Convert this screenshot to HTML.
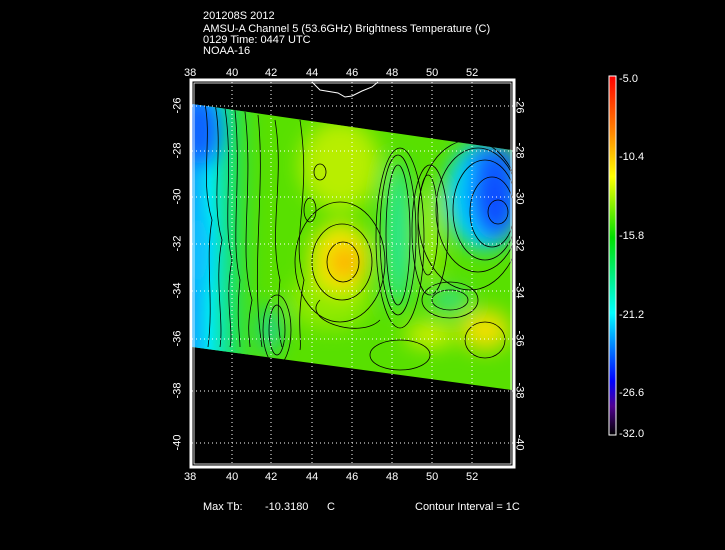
<!DOCTYPE html>
<html><head><meta charset="utf-8"><style>
html,body{margin:0;padding:0;background:#000;}
body{width:725px;height:550px;overflow:hidden;position:relative;font-family:"Liberation Sans",sans-serif;color:#fff;}
.t{position:absolute;font-size:11px;line-height:11px;white-space:pre;color:#fff;}
</style></head><body>
<div class="t" style="left:203px;top:11px">201208S 2012</div>
<div class="t" style="left:203px;top:24px">AMSU-A Channel 5 (53.6GHz) Brightness Temperature (C)</div>
<div class="t" style="left:203px;top:35px">0129 Time: 0447 UTC</div>
<div class="t" style="left:203px;top:46px">NOAA-16</div>

<svg width="725" height="550" style="position:absolute;left:0;top:0" xmlns="http://www.w3.org/2000/svg">
<defs>
<clipPath id="sw"><polygon points="192,104 512,150 512,390 192,347"/></clipPath>
<filter id="bl" x="-50%" y="-50%" width="200%" height="200%"><feGaussianBlur stdDeviation="10"/></filter>
<linearGradient id="cb" x1="0" y1="0" x2="0" y2="1">
<stop offset="0" stop-color="#ff0000"/><stop offset="0.15" stop-color="#ff8000"/>
<stop offset="0.28" stop-color="#ffff00"/><stop offset="0.45" stop-color="#00e000"/>
<stop offset="0.66" stop-color="#00ffff"/><stop offset="0.85" stop-color="#0000ff"/>
<stop offset="0.92" stop-color="#500090"/><stop offset="1" stop-color="#000000"/>
</linearGradient>
<linearGradient id="lf" x1="0" y1="0" x2="1" y2="0">
<stop offset="0" stop-color="#10a0ff"/><stop offset="0.25" stop-color="#00e8f0"/>
<stop offset="0.55" stop-color="#20e060"/><stop offset="1" stop-color="#50e000" stop-opacity="0"/>
</linearGradient>
</defs>
<g clip-path="url(#sw)">
<rect x="180" y="95" width="340" height="300" fill="#58e000"/>
<rect x="190" y="95" width="80" height="260" fill="url(#lf)"/>
<g filter="url(#bl)">
<ellipse cx="200" cy="130" rx="20" ry="35" fill="#1060ff"/>
<ellipse cx="198" cy="250" rx="10" ry="40" fill="#10c0ff"/>
<ellipse cx="270" cy="330" rx="10" ry="25" fill="#10d0a0"/>
<ellipse cx="340" cy="165" rx="40" ry="45" fill="#b8ee00"/>
<ellipse cx="330" cy="300" rx="40" ry="30" fill="#90ea00"/>
<ellipse cx="340" cy="258" rx="30" ry="35" fill="#f0e800"/>
<ellipse cx="345" cy="262" rx="14" ry="16" fill="#ffa800"/>
<ellipse cx="398" cy="235" rx="12" ry="75" fill="#20e8a0"/>
<ellipse cx="430" cy="235" rx="10" ry="50" fill="#a0ec10"/>
<ellipse cx="485" cy="195" rx="40" ry="55" fill="#00d0ff"/>
<ellipse cx="495" cy="195" rx="25" ry="45" fill="#1050ff"/>
<ellipse cx="495" cy="160" rx="25" ry="15" fill="#1060ff"/>
<ellipse cx="450" cy="300" rx="20" ry="12" fill="#30e080"/>
<ellipse cx="485" cy="330" rx="25" ry="20" fill="#f0e000"/>
<ellipse cx="430" cy="335" rx="25" ry="12" fill="#d8f000"/>
</g>
<g fill="none" stroke="#000" stroke-width="0.8">
<path d="M205,104 C212,140 200,180 212,220 C205,260 214,300 208,347"/><path d="M215,104 C224,150 210,200 222,240 C214,280 224,320 220,347"/>
<path d="M225,108 C234,170 222,220 232,260 C224,300 234,330 230,347"/><path d="M235,110 C242,180 230,240 240,280 C236,320 240,335 240,347"/>
<path d="M245,112 C254,190 238,250 252,300 C246,330 250,340 250,347"/><path d="M258,115 C266,190 250,270 262,347"/>
<path d="M275,120 C285,180 268,230 280,280 C276,320 280,340 282,347"/><path d="M300,120 C312,200 290,240 304,280 C296,320 302,340 300,350"/>
<ellipse cx="343" cy="262" rx="16" ry="20"/><ellipse cx="342" cy="262" rx="30" ry="38"/>
<ellipse cx="340" cy="262" rx="45" ry="60"/><path d="M320,300 C300,320 360,340 380,320"/>
<ellipse cx="398" cy="235" rx="12" ry="70"/><ellipse cx="398" cy="235" rx="18" ry="80"/>
<ellipse cx="400" cy="238" rx="24" ry="90"/><ellipse cx="428" cy="225" rx="10" ry="50"/>
<ellipse cx="430" cy="230" rx="18" ry="65"/>
<ellipse cx="498" cy="212" rx="10" ry="12"/><ellipse cx="492" cy="212" rx="22" ry="35"/>
<ellipse cx="485" cy="210" rx="32" ry="50"/><ellipse cx="478" cy="210" rx="42" ry="62"/>
<ellipse cx="470" cy="215" rx="52" ry="75"/>
<ellipse cx="450" cy="300" rx="18" ry="10"/><ellipse cx="450" cy="300" rx="28" ry="18"/>
<ellipse cx="277" cy="330" rx="8" ry="25"/><ellipse cx="277" cy="330" rx="14" ry="35"/>
<ellipse cx="320" cy="172" rx="6" ry="8"/><ellipse cx="310" cy="210" rx="6" ry="12"/>
<ellipse cx="485" cy="340" rx="20" ry="18"/><ellipse cx="400" cy="355" rx="30" ry="15"/>
</g>
</g>
<g stroke="#fff" stroke-width="1" stroke-dasharray="1,3">
<line x1="232" y1="82" x2="232" y2="465"/><line x1="271" y1="82" x2="271" y2="465"/>
<line x1="312" y1="82" x2="312" y2="465"/><line x1="352" y1="82" x2="352" y2="465"/>
<line x1="392" y1="82" x2="392" y2="465"/><line x1="432" y1="82" x2="432" y2="465"/>
<line x1="472" y1="82" x2="472" y2="465"/>
<line x1="192" y1="106" x2="513" y2="106"/><line x1="192" y1="151" x2="513" y2="151"/>
<line x1="192" y1="197" x2="513" y2="197"/><line x1="192" y1="244" x2="513" y2="244"/>
<line x1="192" y1="291" x2="513" y2="291"/><line x1="192" y1="339" x2="513" y2="339"/>
<line x1="192" y1="391" x2="513" y2="391"/><line x1="192" y1="443" x2="513" y2="443"/>
</g>
<path d="M312,82 L320,90 L338,93 L345,97 L352,96 L362,91 L372,87 L378,82" fill="none" stroke="#fff" stroke-width="1"/>
<rect x="191" y="80" width="323" height="387" fill="none" stroke="#fff" stroke-width="3"/>
<rect x="194" y="83" width="317" height="381" fill="none" stroke="#fff" stroke-width="0.8"/>
<rect x="609" y="76" width="7" height="359" fill="url(#cb)" stroke="#fff" stroke-width="1"/>
</svg>

<div class="t" style="left:184px;top:68px">38</div><div class="t" style="left:226px;top:68px">40</div>
<div class="t" style="left:265px;top:68px">42</div><div class="t" style="left:306px;top:68px">44</div>
<div class="t" style="left:346px;top:68px">46</div><div class="t" style="left:386px;top:68px">48</div>
<div class="t" style="left:426px;top:68px">50</div><div class="t" style="left:466px;top:68px">52</div>
<div class="t" style="left:184px;top:472px">38</div><div class="t" style="left:226px;top:472px">40</div>
<div class="t" style="left:265px;top:472px">42</div><div class="t" style="left:306px;top:472px">44</div>
<div class="t" style="left:346px;top:472px">46</div><div class="t" style="left:386px;top:472px">48</div>
<div class="t" style="left:426px;top:472px">50</div><div class="t" style="left:466px;top:472px">52</div>
<div class="t" style="left:170px;top:100px;transform:rotate(-90deg)">-26</div>
<div class="t" style="left:170px;top:145px;transform:rotate(-90deg)">-28</div>
<div class="t" style="left:170px;top:191px;transform:rotate(-90deg)">-30</div>
<div class="t" style="left:170px;top:238px;transform:rotate(-90deg)">-32</div>
<div class="t" style="left:170px;top:285px;transform:rotate(-90deg)">-34</div>
<div class="t" style="left:170px;top:333px;transform:rotate(-90deg)">-36</div>
<div class="t" style="left:170px;top:385px;transform:rotate(-90deg)">-38</div>
<div class="t" style="left:170px;top:437px;transform:rotate(-90deg)">-40</div>
<div class="t" style="left:511px;top:100px;transform:rotate(90deg)">-26</div>
<div class="t" style="left:511px;top:145px;transform:rotate(90deg)">-28</div>
<div class="t" style="left:511px;top:191px;transform:rotate(90deg)">-30</div>
<div class="t" style="left:511px;top:238px;transform:rotate(90deg)">-32</div>
<div class="t" style="left:511px;top:285px;transform:rotate(90deg)">-34</div>
<div class="t" style="left:511px;top:333px;transform:rotate(90deg)">-36</div>
<div class="t" style="left:511px;top:385px;transform:rotate(90deg)">-38</div>
<div class="t" style="left:511px;top:437px;transform:rotate(90deg)">-40</div>
<div class="t" style="left:619px;top:74px">-5.0</div>
<div class="t" style="left:619px;top:152px">-10.4</div>
<div class="t" style="left:619px;top:231px">-15.8</div>
<div class="t" style="left:619px;top:310px">-21.2</div>
<div class="t" style="left:619px;top:388px">-26.6</div>
<div class="t" style="left:619px;top:429px">-32.0</div>
<div class="t" style="left:203px;top:502px">Max Tb:</div>
<div class="t" style="left:265px;top:502px">-10.3180</div>
<div class="t" style="left:327px;top:502px">C</div>
<div class="t" style="left:415px;top:502px">Contour Interval = 1C</div>
</body></html>
